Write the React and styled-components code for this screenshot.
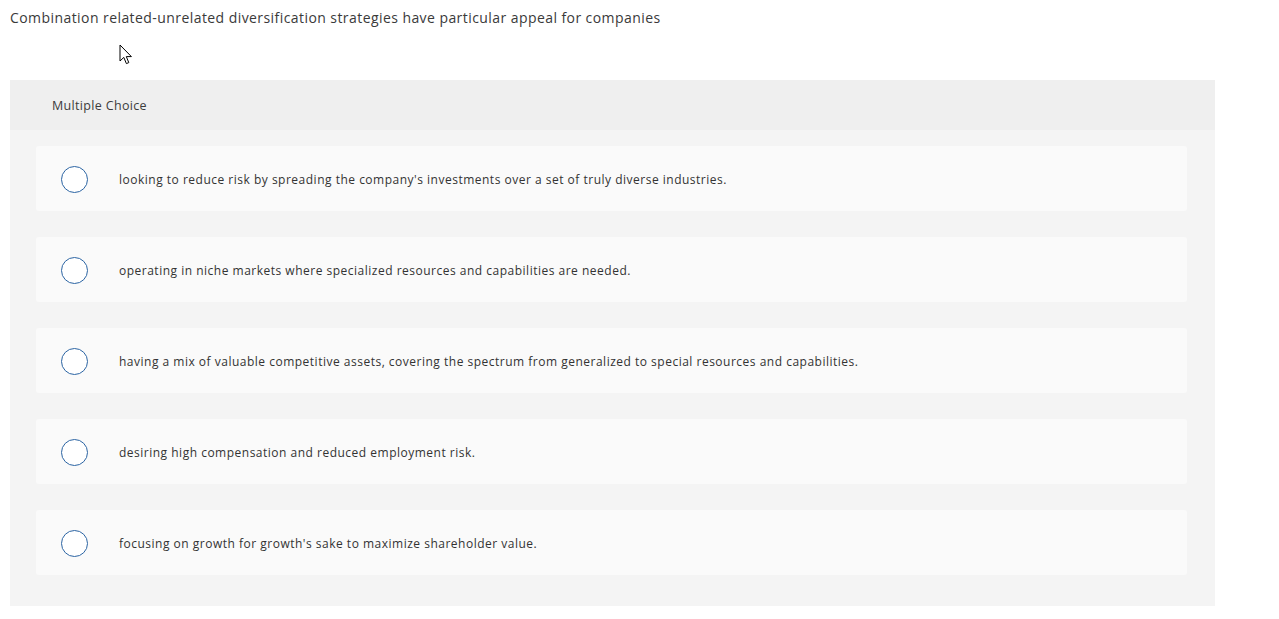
import React from "react";
import styled, { createGlobalStyle } from "styled-components";

const GlobalStyle = createGlobalStyle`
  body {
    margin: 0;
    background: #ffffff;
    font-family: "Open Sans", "Lato", sans-serif;
    color: #333333;
  }
`;

const choices = [
  "looking to reduce risk by spreading the company's investments over a set of truly diverse industries.",
  "operating in niche markets where specialized resources and capabilities are needed.",
  "having a mix of valuable competitive assets, covering the spectrum from generalized to special resources and capabilities.",
  "desiring high compensation and reduced employment risk.",
  "focusing on growth for growth's sake to maximize shareholder value.",
];

const Page = styled.div`
  width: 1279px;
  height: 619px;
  padding: 9px 0 0 10px;
  box-sizing: border-box;
`;

const Question = styled.p`
  margin: 0;
  font-size: 14px;
  line-height: 18px;
  color: #3a3a3a;
  letter-spacing: 0.43px;
`;

const CursorRow = styled.div`
  height: 53px;
  position: relative;
`;

const Cursor = styled.svg`
  position: absolute;
  left: 109px;
  top: 17px;
`;

const Panel = styled.section`
  width: 1205px;
  background: #f4f4f4;
  padding-bottom: 31px;
`;

const PanelHeader = styled.div`
  height: 50px;
  background: #efefef;
  display: flex;
  align-items: center;
  padding-left: 42px;
  font-size: 12.5px;
  color: #3c3c3c;
  letter-spacing: 0.33px;
`;

const ChoiceList = styled.ul`
  list-style: none;
  margin: 0;
  padding: 16px 28px 0 26px;
  display: flex;
  flex-direction: column;
  gap: 26px;
`;

const Choice = styled.li`
  height: 65px;
  box-sizing: border-box;
  padding: 2px 0 0 25px;
  background: #fafafa;
  border-radius: 3px;
  display: flex;
  align-items: center;
`;

const Radio = styled.span`
  width: 25px;
  height: 25px;
  border-radius: 50%;
  border: 1.5px solid #2b64a3;
  background: #ffffff;
  flex-shrink: 0;
`;

const ChoiceText = styled.span`
  margin-left: 31px;
  font-size: 12px;
  color: #333333;
  letter-spacing: 0.5px;
`;

export default function App() {
  return (
    <Page>
      <GlobalStyle />
      <Question>
        Combination related-unrelated diversification strategies have particular appeal for companies
      </Question>
      <CursorRow>
        <Cursor width="14" height="22" viewBox="0 0 14 22">
          <path
            d="M1 1 L1 17 L4.8 13.4 L7.4 19.6 L9.8 18.6 L7.3 12.6 L12.4 12.6 Z"
            fill="#ffffff"
            stroke="#000000"
            strokeWidth="1"
            strokeLinejoin="miter"
          />
        </Cursor>
      </CursorRow>
      <Panel>
        <PanelHeader>Multiple Choice</PanelHeader>
        <ChoiceList>
          {choices.map((c) => (
            <Choice key={c}>
              <Radio />
              <ChoiceText>{c}</ChoiceText>
            </Choice>
          ))}
        </ChoiceList>
      </Panel>
    </Page>
  );
}
